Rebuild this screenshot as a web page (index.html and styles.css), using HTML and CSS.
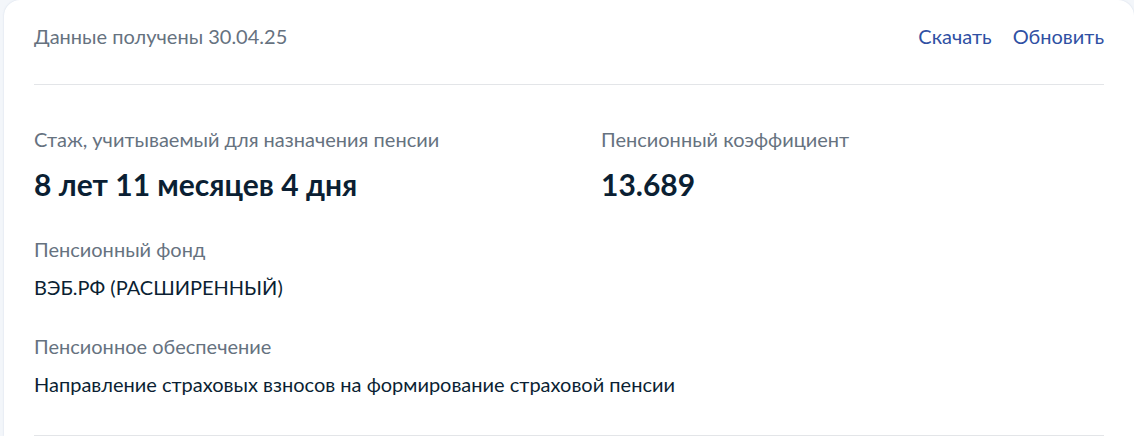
FILE: index.html
```html
<!DOCTYPE html>
<html lang="ru">
<head>
<meta charset="utf-8">
<link rel="stylesheet" href="styles.css">
</head>
<body>
<div class="card">
  <div class="head">
    <span class="date">Данные получены 30.04.25</span>
    <div class="actions">
      <a class="link">Скачать</a>
      <a class="link">Обновить</a>
    </div>
  </div>
  <div class="body">
    <div class="grid">
      <div class="item">
        <div class="label">Стаж, учитываемый для назначения пенсии</div>
        <div class="big">8 лет 11 месяцев 4 дня</div>
      </div>
      <div class="item">
        <div class="label">Пенсионный коэффициент</div>
        <div class="big">13.689</div>
      </div>
    </div>
    <div class="item row first">
      <div class="label">Пенсионный фонд</div>
      <div class="value">ВЭБ.РФ (РАСШИРЕННЫЙ)</div>
    </div>
    <div class="item row second">
      <div class="label">Пенсионное обеспечение</div>
      <div class="value">Направление страховых взносов на формирование страховой пенсии</div>
    </div>
  </div>
</div>
</body>
</html>
```
FILE: styles.css
```css
html, body {
  margin: 0;
  padding: 0;
  background: #f3f6fa;
  font-family: Lato, "Noto Sans", sans-serif;
}
.card {
  margin-left: 4px;
  background: #fff;
  border-radius: 16px 16px 0 0;
  box-shadow: 0 0 2px rgba(150, 170, 200, 0.35);
  padding: 0 30px;
  height: 436px;
  box-sizing: border-box;
  overflow: hidden;
}
.head {
  height: 85px;
  display: flex;
  align-items: center;
  justify-content: space-between;
  border-bottom: 1px solid #e3e5e8;
  box-sizing: border-box;
  padding-bottom: 12px;
}
.date {
  font-size: 20px;
  color: #66727f;
}
.actions {
  display: flex;
  gap: 21px;
}
.link {
  font-size: 20px;
  color: #2f50a3;
  cursor: pointer;
}
.body {
  padding-top: 40px;
  border-bottom: 1px solid #e3e5e8;
  padding-bottom: 37px;
}
.grid {
  display: grid;
  grid-template-columns: 1fr 1fr;
  column-gap: 64px;
}
.label {
  font-size: 20px;
  color: #66727f;
  line-height: 28px;
}
.big {
  font-size: 30px;
  font-weight: 700;
  color: #0b1f33;
  line-height: 36px;
  margin-top: 13px;
}
.value {
  font-size: 20px;
  color: #0b1f33;
  line-height: 28px;
  margin-top: 10px;
}
.row.first {
  margin-top: 33px;
}
.row.second {
  margin-top: 31px;
}
```
